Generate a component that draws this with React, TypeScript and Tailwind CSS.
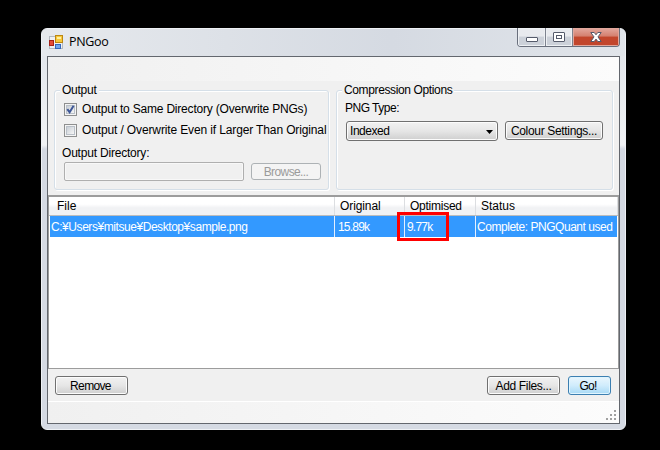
import type { ReactNode } from 'react';

function GroupBox({ title, className, titleClass, children }: { title: string; className: string; titleClass: string; children: ReactNode }) {
  return (
    <section className={`relative h-[100px] rounded-[3px] border border-[#d5dfe8] shadow-[inset_1px_1px_0_#fff,1px_1px_0_#fff] ${className}`}>
      <h2 className={`absolute top-[-9px] left-[5px] h-4 bg-[#f0f0f0] px-[2px] leading-4 ${titleClass}`}>{title}</h2>
      {children}
    </section>
  );
}

function CheckBox({ checked }: { checked?: boolean }) {
  return (
    <span className="flex size-[13px] shrink-0 items-center justify-center border border-[#8e8f8f] bg-[#f4f4f4]">
      <span className="flex size-[9px] items-center justify-center border border-[#b9c0c8] bg-linear-to-br from-[#c9cfd6] to-[#f6f6f6]">
        {checked && (
          <svg className="size-[9px] shrink-0 overflow-visible" viewBox="0 0 9 9" fill="none">
            <path d="M1.3 4.2 L3.6 7.2 L7.6 0.8" stroke="#3f5796" strokeWidth="2" />
          </svg>
        )}
      </span>
    </span>
  );
}

const face = 'flex items-center justify-center rounded-[3px] border border-[#707070] bg-linear-to-b from-[#f2f2f2] from-0% via-[#e6e6e6] via-50% to-[#cfcfcf] shadow-[inset_0_0_0_1px_#fcfcfc]';

function Header({ label, className, text }: { label: string; className: string; text: string }) {
  return (
    <div className={`flex h-full items-center border-r border-[#dcdee1] ${className}`}>
      <span className={text}>{label}</span>
    </div>
  );
}

export default function App() {
  return (
    <main className="h-[450px] w-[660px] overflow-hidden bg-black pt-[28px] pl-[41px] font-['Liberation_Sans','Noto_Sans_CJK_JP',sans-serif] text-[12px] leading-4 whitespace-nowrap text-black">
      <div className="flex h-[402px] w-[585px] flex-col rounded-[6px] border border-[#eef1f5] bg-linear-to-b from-[#dfe3e9] from-0% via-[#f1f3f5] via-[29%] to-[#d5dae3] to-[30%]">
        <header className="flex h-[27px] shrink-0 items-start justify-between rounded-t-[5px] bg-linear-to-r from-[#e6e9ed] via-[#d5dae2] via-60% to-[#e1e5ea] pr-[5px] pl-[7px]">
          <div className="flex items-center pt-[5px]">
            <svg className="h-[15px] w-[15px]" viewBox="0 0 15 15">
              <rect x="0.5" y="1.5" width="13" height="12" fill="#eef0f3" stroke="#b4b9c0" />
              <rect x="6.5" y="0.5" width="7" height="7" fill="#f7c83c" stroke="#bc8711" />
              <rect x="8" y="2" width="4" height="2" fill="#fff0a0" />
              <rect x="0.5" y="5.5" width="4" height="5" fill="#e44b37" stroke="#a32319" />
              <rect x="6.5" y="9.5" width="5" height="4" fill="#70a7ef" stroke="#3268bc" />
            </svg>
            <h1 className="ml-[5px] font-['Open_Sans',sans-serif] text-[12.5px] leading-[16px] tracking-[-0.3px]">PNGoo</h1>
          </div>
          <div className="-mt-px flex h-[19px] w-[103px] overflow-hidden rounded-b-[4px] border border-t-0 border-[#696f7c]">
            <span className="flex w-[28px] justify-center border-r border-[#7d828e] bg-linear-to-b from-[#e8eaee] from-45% to-[#ccd1d9] to-50% pt-[9px] shadow-[inset_0_0_0_1px_#edf0f3]">
              <span className="h-[5px] w-3 rounded-[1px] border border-[#555b6b] bg-white" />
            </span>
            <span className="flex w-[27px] justify-center border-r border-[#7d828e] bg-linear-to-b from-[#e8eaee] from-45% to-[#ccd1d9] to-50% pt-[4px] shadow-[inset_0_0_0_1px_#edf0f3]">
              <span className="flex h-[10px] w-3 items-center justify-center rounded-[1px] border border-[#555b6b] bg-white">
                <span className="h-1 w-[6px] border border-[#555b6b] bg-white" />
              </span>
            </span>
            <span className="flex flex-1 items-center justify-center bg-linear-to-b from-[#e3a99f] from-0% via-[#d4806f] via-45% to-[#c2462c] to-50% shadow-[inset_0_0_0_1px_#e0a79c]">
              <svg className="h-[10px] w-3" viewBox="0 0 12 10">
                <path d="M0.8 0.5 H4.2 L6 2.8 L7.8 0.5 H11.2 L8 4.9 L11.2 9.5 H7.8 L6 7.1 L4.2 9.5 H0.8 L4 4.9 Z" fill="#fff" stroke="#565a6b" />
              </svg>
            </span>
          </div>
        </header>
        <div className="mx-[5px] flex h-[368px] flex-col border border-[#63676e] bg-[#f0f0f0]">
          <div className="h-6 shrink-0 bg-linear-to-r from-[#f0f0f0] to-[#fcfcfc]" />
          <div className="flex h-[114px] shrink-0 gap-[7px] pt-[9px] pl-[6px]">
            <GroupBox title="Output" className="w-[275px]" titleClass="tracking-[-0.25px]">
              <div className="flex flex-col pt-[12px] pl-[9px]">
                <div className="flex h-[13px] items-center gap-[5px]"><CheckBox checked /><span className="-mt-px tracking-[-0.2px]">Output to Same Directory (Overwrite PNGs)</span></div>
                <div className="mt-2 flex h-[13px] items-center gap-[5px]"><CheckBox /><span className="relative z-10 -mt-px bg-[#f0f0f0] tracking-[-0.13px]">Output / Overwrite Even if Larger Than Original</span></div>
                <span className="mt-[8px] -ml-[2px] tracking-[-0.2px]">Output Directory:</span>
                <div className="mt-px flex items-center gap-[7px]">
                  <div className="h-[19px] w-[180px] rounded-[2px] border border-[#afafaf] shadow-[inset_0_0_0_1px_#f8f8f8]" />
                  <button className="h-[17px] w-[70px] rounded-[3px] border border-[#adb2b5] bg-[#f4f4f4] text-[12px] leading-[16px] tracking-[-0.6px] text-[#9b9b9b]">Browse...</button>
                </div>
              </div>
            </GroupBox>
            <GroupBox title="Compression Options" className="w-[277px]" titleClass="tracking-[-0.37px]">
              <div className="pt-[9px] pl-[8px] tracking-[-0.5px]">PNG Type:</div>
              <div className="mt-[5px] ml-[9px] flex gap-[7px]">
                <div className={`${face} h-[20px] w-[152px] !justify-between pr-[4px] pl-[3px]`}>
                  <span className="tracking-[-0.45px]">Indexed</span>
                  <svg className="mt-[2px] h-1 w-[7px]" viewBox="0 0 7 4"><path d="M0 0 H7 L3.5 4 Z" fill="#000" /></svg>
                </div>
                <button className={`${face} h-[19px] w-[98px] tracking-[-0.33px]`}>Colour Settings...</button>
              </div>
            </GroupBox>
          </div>
          <div className="flex h-[174px] shrink-0 flex-col border border-t-2 border-[#9c9c9c] bg-white">
            <div className="flex h-[19px] shrink-0 border-b border-[#bcbcbc] bg-linear-to-b from-white from-40% to-[#f1f2f4] to-60%">
              <Header label="File" className="w-[286px] shrink-0 pl-2" text="" />
              <Header label="Original" className="w-[70px] shrink-0 pl-[5px]" text="tracking-[-0.1px]" />
              <Header label="Optimised" className="w-[71px] shrink-0 pl-[5px]" text="tracking-[-0.25px]" />
              <Header label="Status" className="flex-1 pl-[5px]" text="" />
            </div>
            <div className="ml-px flex h-[21px] w-[567px] shrink-0 items-center bg-[#3399ff] text-white">
              <span className="h-full w-[285px] shrink-0 border-r border-[#e4efff] pl-px leading-[22px] tracking-[-0.44px]">C:¥Users¥mitsue¥Desktop¥sample.png</span>
              <span className="h-full w-[70px] shrink-0 border-r border-[#e4efff] pl-[3px] leading-[22px] tracking-[-0.8px]">15.89k</span>
              <div className="relative h-full w-[71px] shrink-0 border-r border-[#e4efff] pl-[2px] leading-[22px] tracking-[-0.8px]">
                9.77k
                <div className="absolute top-[-4px] left-[-8px] h-[29px] w-[52px] border-3 border-[#ff0000]" />
              </div>
              <span className="pl-px leading-[22px] tracking-[-0.46px]">Complete: PNGQuant used</span>
            </div>
          </div>
          <div className="flex h-[32px] shrink-0 items-start pt-[7px] pr-[8px] pl-[7px]">
            <button className={`${face} mr-auto h-[19px] w-[73px] pr-[2px] tracking-[-0.65px]`}>Remove</button>
            <button className={`${face} h-[19px] w-[73px] tracking-[-0.35px]`}>Add Files...</button>
            <button className="ml-2 flex h-[19px] w-[43px] items-center justify-center rounded-[3px] border border-[#3c7fb1] bg-linear-to-b from-[#eaf6fd] via-[#d0ecfc] to-[#a7d9f5] pr-[3px] tracking-[-0.7px] shadow-[inset_0_0_0_1px_#dff5ff]">Go!</button>
          </div>
          <footer className="flex flex-1 items-end justify-end border-t border-white bg-linear-to-r from-[#f0f0f0] to-[#fcfcfc] pr-[2px] pb-[3px]">
            <svg className="h-[10px] w-[11px]" viewBox="0 0 11 10" fill="#a0a0a0">
              <path d="M8 0h2v2h-2z M4 4h2v2h-2z M8 4h2v2h-2z M0 8h2v2h-2z M4 8h2v2h-2z M8 8h2v2h-2z" />
            </svg>
          </footer>
        </div>
      </div>
    </main>
  );
}
